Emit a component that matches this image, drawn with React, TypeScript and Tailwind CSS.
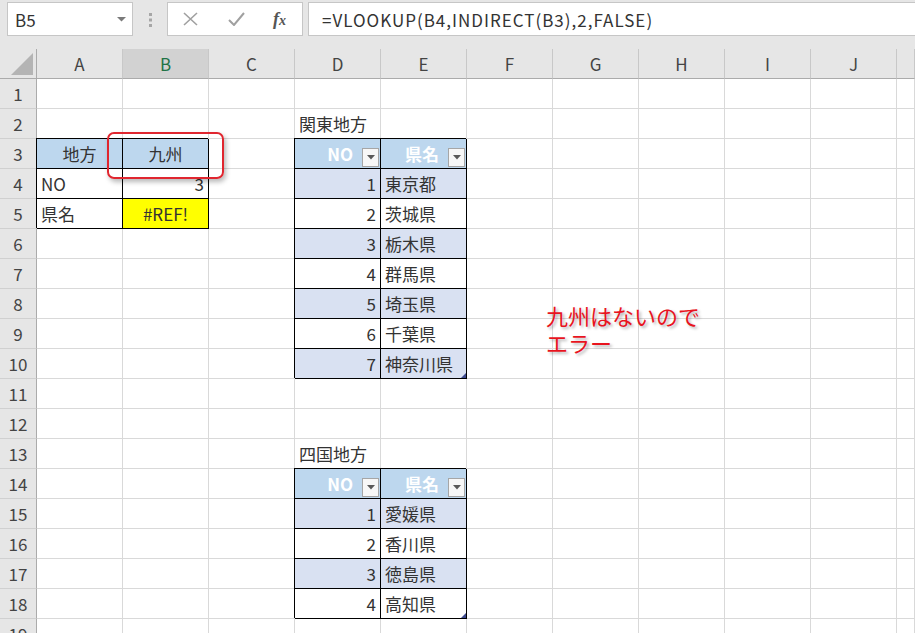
import React from 'react';

type Cell = {
  t?: string;
  align?: 'left' | 'center' | 'right';
  bg?: string;
  border?: boolean;
  th?: boolean;
  handle?: boolean;
};

const COLS = ['A', 'B', 'C', 'D', 'E', 'F', 'G', 'H', 'I', 'J', 'K'];

const cells: Record<string, Cell> = {
  A3: { t: '地方', align: 'center', bg: 'bg-[#bdd7ee]', border: true },
  B3: { t: '九州', align: 'center', bg: 'bg-[#bdd7ee]', border: true },
  A4: { t: 'NO', border: true },
  B4: { t: '3', align: 'right', border: true },
  A5: { t: '県名', border: true },
  B5: { t: '#REF!', align: 'center', bg: 'bg-[#ffff00]', border: true },
  D2: { t: '関東地方' },
  D13: { t: '四国地方' },
};

// table objects: header row + banded rows
function addTable(row: number, names: string[]) {
  cells[`D${row}`] = { t: 'NO', th: true, border: true, bg: 'bg-[#bdd7ee]' };
  cells[`E${row}`] = { t: '県名', th: true, border: true, bg: 'bg-[#bdd7ee]' };
  names.forEach((n, i) => {
    const bg = i % 2 === 0 ? 'bg-[#d9e1f2]' : 'bg-white';
    cells[`D${row + 1 + i}`] = { t: String(i + 1), align: 'right', border: true, bg };
    cells[`E${row + 1 + i}`] = { t: n, border: true, bg, handle: i === names.length - 1 };
  });
}
addTable(3, ['東京都', '茨城県', '栃木県', '群馬県', '埼玉県', '千葉県', '神奈川県']);
addTable(14, ['愛媛県', '香川県', '徳島県', '高知県']);

function FilterButton() {
  return (
    <span className="ml-[9px] mr-[1px] mb-[1px] flex h-[19px] w-[17px] shrink-0 items-center justify-center self-end border border-[#a6a6a6] bg-[#f7f7f7]">
      <svg width="8" height="5" viewBox="0 0 8 5">
        <path d="M0 0h8L4 4.5z" fill="#595959" />
      </svg>
    </span>
  );
}

function GridCell({ id }: { id: string }) {
  const c = cells[id];
  if (!c) return <div className="border-r border-b border-[#d9d9d9]" />;
  const justify = c.th || c.align === 'right' ? 'justify-end' : c.align === 'center' ? 'justify-center' : 'justify-start';
  return (
    <div
      className={`relative flex items-center px-[4px] whitespace-nowrap border-r border-b ${justify} ${c.bg ?? ''} ${
        c.border ? 'border-black shadow-[-1px_-1px_0_0_#000]' : 'border-[#d9d9d9]'
      } ${c.th ? 'pr-0 font-bold text-white' : 'text-[#333]'}`}
    >
      <span>{c.t}</span>
      {c.th && <FilterButton />}
      {c.handle && (
        <svg className="absolute right-0 bottom-0" width="5" height="5" viewBox="0 0 5 5">
          <path d="M5 0v5H0z" fill="#3e4b8f" />
        </svg>
      )}
    </div>
  );
}

export default function App() {
  const rows = Array.from({ length: 19 }, (_, i) => i + 1);
  return (
    <div className="relative h-[633px] w-[915px] overflow-hidden bg-white font-['Noto_Sans_CJK_JP',sans-serif] text-[17px] leading-none">
      {/* formula bar */}
      <div className="flex h-[49px] items-start bg-[#e6e6e6] pt-[2px]">
        <div className="ml-[7px] flex h-[34px] w-[126px] items-center justify-between border border-[#c6c6c6] bg-white pl-[7px] pr-[6px] text-[#333]">
          <span>B5</span>
          <svg width="9" height="5" viewBox="0 0 9 5">
            <path d="M0 0h9L4.5 4.5z" fill="#7a7a7a" />
          </svg>
        </div>
        <svg className="mt-[10px] ml-[15px]" width="5" height="16" viewBox="0 0 5 16">
          <rect x="1" y="1" width="3" height="3" fill="#a6a6a6" />
          <rect x="1" y="6.5" width="3" height="3" fill="#a6a6a6" />
          <rect x="1" y="12" width="3" height="3" fill="#a6a6a6" />
        </svg>
        <div className="ml-[14px] flex h-[34px] w-[136px] items-center border border-[#c6c6c6] bg-white">
          <svg className="ml-[15px]" width="15" height="14" viewBox="0 0 15 14">
            <path d="M1 1l13 12M14 1L1 13" stroke="#a0a0a0" strokeWidth="1.6" fill="none" />
          </svg>
          <svg className="ml-[30px]" width="17" height="14" viewBox="0 0 17 14">
            <path d="M1 8l5 5L16 1" stroke="#a0a0a0" strokeWidth="2" fill="none" />
          </svg>
          <span className="ml-[28px] font-['Liberation_Serif',serif] text-[18px] font-bold italic text-[#555]">
            f<span className="text-[14px]">x</span>
          </span>
        </div>
        <div className="ml-[5px] -mr-[2px] flex h-[34px] flex-1 items-center border border-[#c6c6c6] bg-white pl-[13px] tracking-[1px] text-[#333]">
          =VLOOKUP(B4,INDIRECT(B3),2,FALSE)
        </div>
      </div>

      {/* sheet grid */}
      <div className="grid grid-cols-[37px_repeat(10,86px)_1fr] auto-rows-[30px]">
        <div className="flex items-end justify-end border-r border-b border-[#ababab] bg-[#e6e6e6] p-[3px]">
          <svg width="22" height="22" viewBox="0 0 22 22">
            <path d="M22 0v22H0z" fill="#b4b4b4" />
          </svg>
        </div>
        {COLS.map((c) => (
          <div
            key={c}
            className={`flex items-center justify-center border-r border-b border-r-[#c8c8c8] border-b-[#ababab] ${
              c === 'B' ? 'bg-[#d2d2d2] text-[#217346]' : 'bg-[#e6e6e6] text-[#444]'
            }`}
          >
            {c === 'K' ? '' : c}
          </div>
        ))}
        {rows.map((r) => (
          <React.Fragment key={r}>
            <div className="flex items-center justify-center border-r border-b border-r-[#ababab] border-b-[#d0d0d0] bg-[#e6e6e6] text-[#444]">
              {r}
            </div>
            {COLS.map((c) => (
              <GridCell key={c} id={`${c}${r}`} />
            ))}
          </React.Fragment>
        ))}
      </div>

      {/* callout drawn over the sheet */}
      <div className="absolute left-[107px] top-[132px] h-[47px] w-[117px] rounded-[7px] border-2 border-[#e0262f] shadow-[2px_3px_5px_rgba(0,0,0,0.28)]" />
      <div className="absolute left-[546px] top-[302px] text-[22px] leading-[27px] text-[#e8141e] [text-shadow:2px_2px_3px_rgba(0,0,0,0.3)]">
        九州はないので
        <br />
        エラー
      </div>
    </div>
  );
}
